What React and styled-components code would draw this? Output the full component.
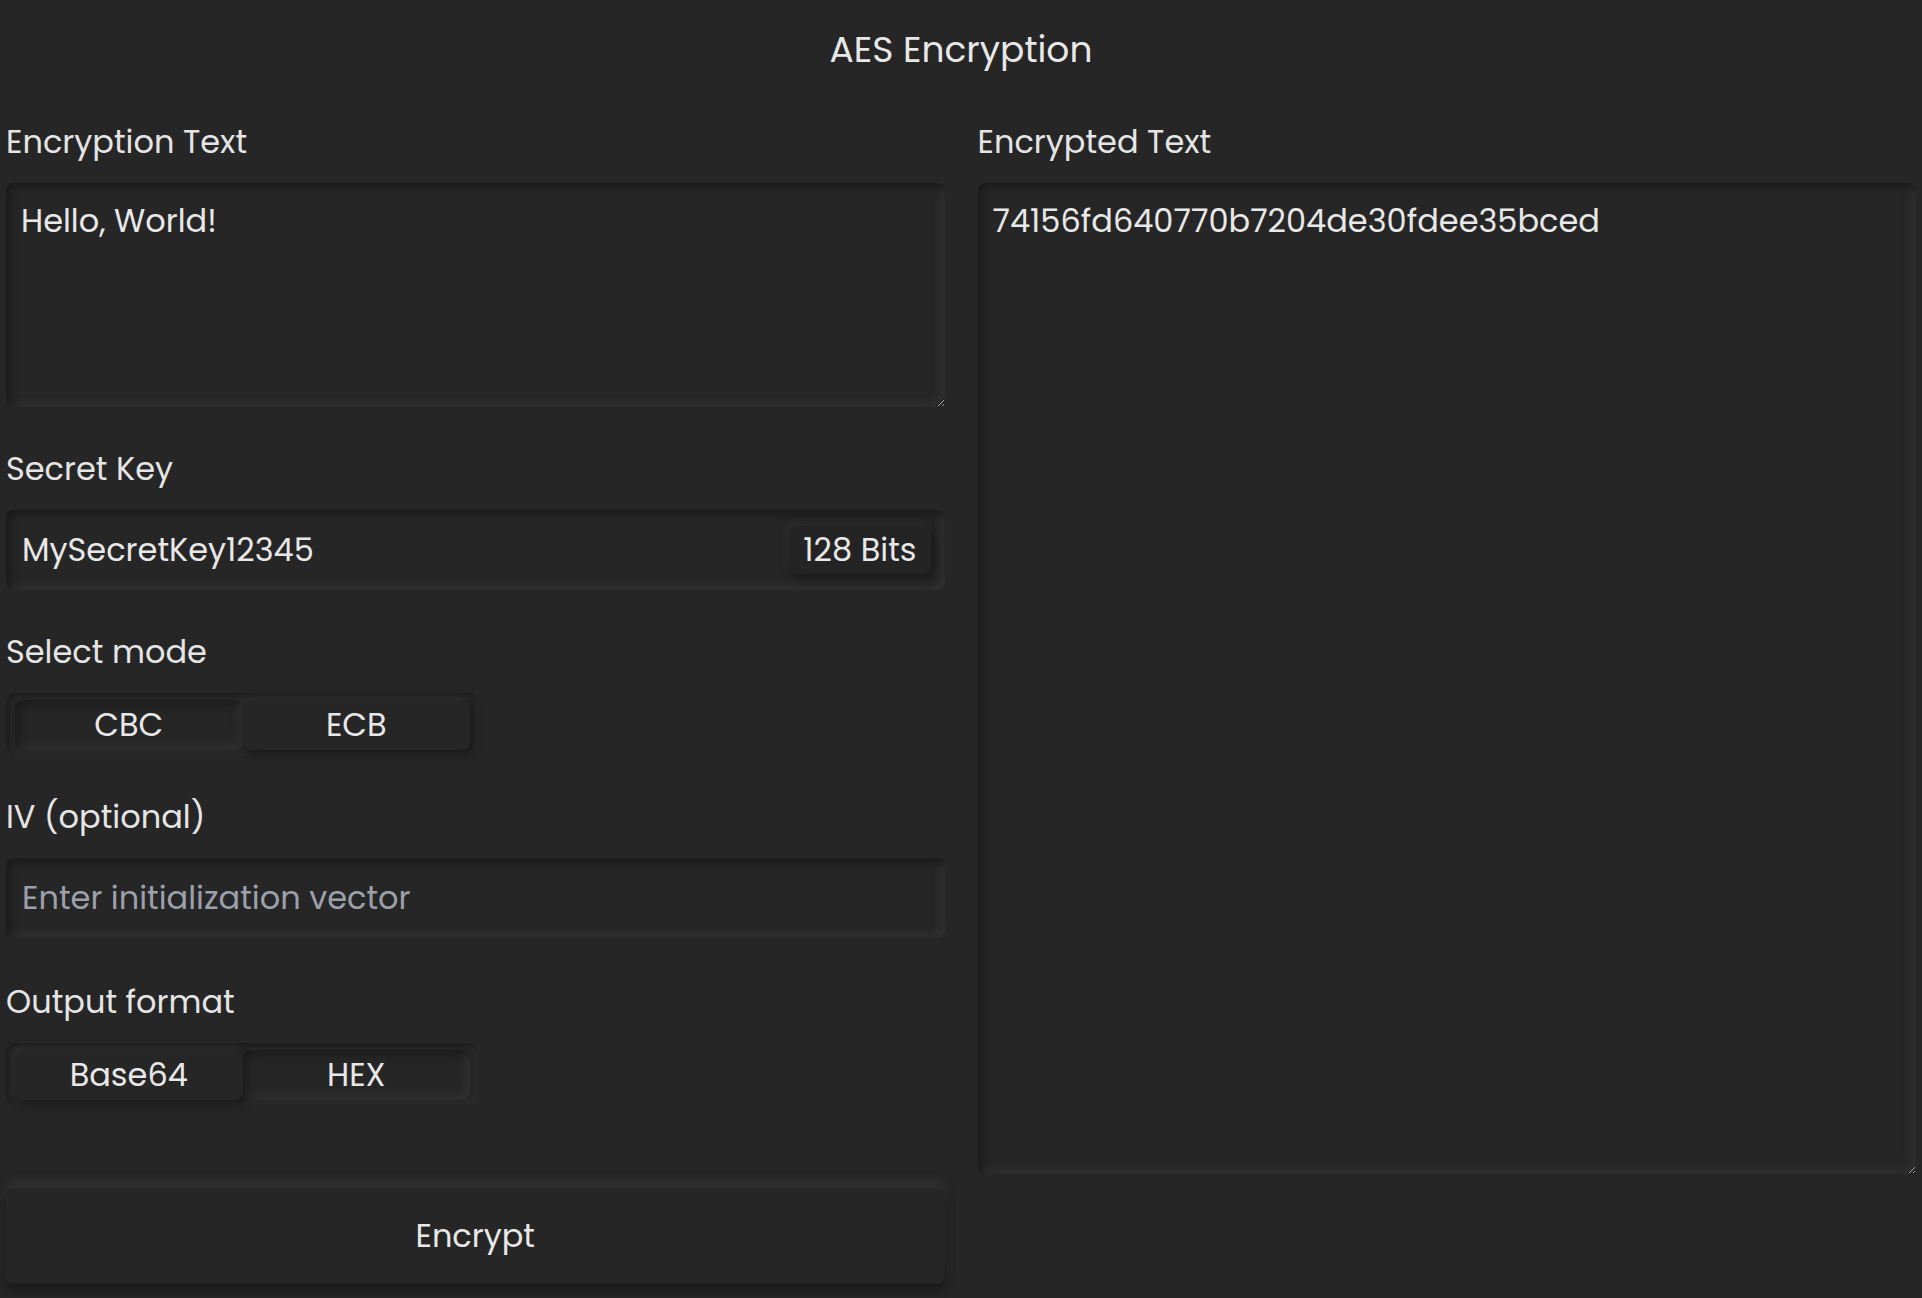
import React, { useState } from 'react';
import styled, { createGlobalStyle } from 'styled-components';

const GlobalStyle = createGlobalStyle`
  html, body {
    margin: 0;
    padding: 0;
    background: #262626;
  }
  body {
    font-family: "Poppins", Inter, "Noto Sans", sans-serif;
    color: #e5e5e5;
  }
  * {
    box-sizing: border-box;
  }
`;

const inset = `
  box-shadow: inset 4px 4px 8px #1a1a1a, inset -4px -4px 8px #333333;
`;

const Page = styled.main`
  min-height: 1298px;
  padding: 23px 6px 0;
  background: #262626;
`;

const Title = styled.h1`
  margin: 0 0 41px;
  font-size: 36px;
  line-height: 54px;
  font-weight: 400;
  text-align: center;
  color: #e8e8e8;
`;

const Columns = styled.div`
  display: grid;
  grid-template-columns: 1fr 1fr;
  column-gap: 33px;
  align-items: start;
`;

const Column = styled.div`
  display: flex;
  flex-direction: column;
  gap: 38px;
`;

const Field = styled.div`
  display: flex;
  flex-direction: column;
  margin-top: ${(p) => p.$offset || 0}px;
`;

const Label = styled.label`
  font-size: 32px;
  line-height: 48px;
  margin-bottom: 17px;
  color: #e5e5e5;
`;

const TextArea = styled.textarea`
  width: 100%;
  height: ${(p) => p.$height}px;
  padding: 14px 15px;
  border: none;
  border-radius: 8px;
  background: #262626;
  color: #e8e8e8;
  font: inherit;
  font-size: 32px;
  line-height: 48px;
  resize: vertical;
  outline: none;
  ${inset}
`;

const InputWrap = styled.div`
  display: flex;
  align-items: center;
  height: 80px;
  padding: 0 14px;
  border-radius: 8px;
  background: #262626;
  ${inset}
`;

const Input = styled.input`
  flex: 1;
  min-width: 0;
  border: none;
  background: transparent;
  color: #e8e8e8;
  font: inherit;
  font-size: 32px;
  outline: none;

  &::placeholder {
    color: #9ca0ab;
  }
`;

const Badge = styled.span`
  padding: 0 14px;
  height: 48px;
  display: flex;
  align-items: center;
  border-radius: 8px;
  background: #242424;
  font-size: 32px;
  color: #e8e8e8;
  box-shadow: 4px 4px 8px #1a1a1a, -3px -3px 6px #2e2e2e;
`;

const Segmented = styled.div`
  display: grid;
  grid-template-columns: 1fr 1fr;
  width: 472px;
  height: 62px;
  padding: 7px 8px 7px 9px;
  border-radius: 10px;
  background: #262626;
  box-shadow: inset 2px 2px 5px #1c1c1c, inset -2px -2px 5px #2f2f2f;
`;

const SegButton = styled.button`
  border: none;
  border-radius: 8px;
  background: #262626;
  color: #e8e8e8;
  font: inherit;
  font-size: 32px;
  cursor: pointer;
  box-shadow: ${(p) =>
    p.$active
      ? 'inset 4px 4px 8px #1b1b1b, inset -4px -4px 8px #333333'
      : '4px 4px 8px #1a1a1a, -3px -3px 6px #2f2f2f'};
`;

const EncryptButton = styled.button`
  margin-top: 45px;
  height: 96px;
  border: none;
  border-radius: 8px;
  background: #262626;
  color: #e8e8e8;
  font: inherit;
  font-size: 32px;
  cursor: pointer;
  box-shadow: 0 6px 10px #1a1a1a, 0 -6px 10px #323232;
`;

const Toggle = ({ options, value, onChange }) => (
  <Segmented>
    {options.map((o) => (
      <SegButton key={o} $active={value === o} onClick={() => onChange(o)}>
        {o}
      </SegButton>
    ))}
  </Segmented>
);

export default function App() {
  const [text, setText] = useState('Hello, World!');
  const [key, setKey] = useState('MySecretKey12345');
  const [mode, setMode] = useState('CBC');
  const [iv, setIv] = useState('');
  const [format, setFormat] = useState('HEX');

  return (
    <>
      <GlobalStyle />
      <Page>
        <Title>AES Encryption</Title>
        <Columns>
          <Column>
            <Field>
              <Label>Encryption Text</Label>
              <TextArea $height={224} value={text} onChange={(e) => setText(e.target.value)} />
            </Field>
            <Field>
              <Label>Secret Key</Label>
              <InputWrap>
                <Input value={key} onChange={(e) => setKey(e.target.value)} />
                <Badge>{key.length * 8} Bits</Badge>
              </InputWrap>
            </Field>
            <Field>
              <Label>Select mode</Label>
              <Toggle options={['CBC', 'ECB']} value={mode} onChange={setMode} />
            </Field>
            <Field>
              <Label>IV (optional)</Label>
              <InputWrap>
                <Input
                  placeholder="Enter initialization vector"
                  value={iv}
                  onChange={(e) => setIv(e.target.value)}
                />
              </InputWrap>
            </Field>
            <Field $offset={2}>
              <Label>Output format</Label>
              <Toggle options={['Base64', 'HEX']} value={format} onChange={setFormat} />
            </Field>
            <EncryptButton>Encrypt</EncryptButton>
          </Column>
          <Column>
            <Field>
              <Label>Encrypted Text</Label>
              <TextArea $height={991} readOnly value="74156fd640770b7204de30fdee35bced" />
            </Field>
          </Column>
        </Columns>
      </Page>
    </>
  );
}
